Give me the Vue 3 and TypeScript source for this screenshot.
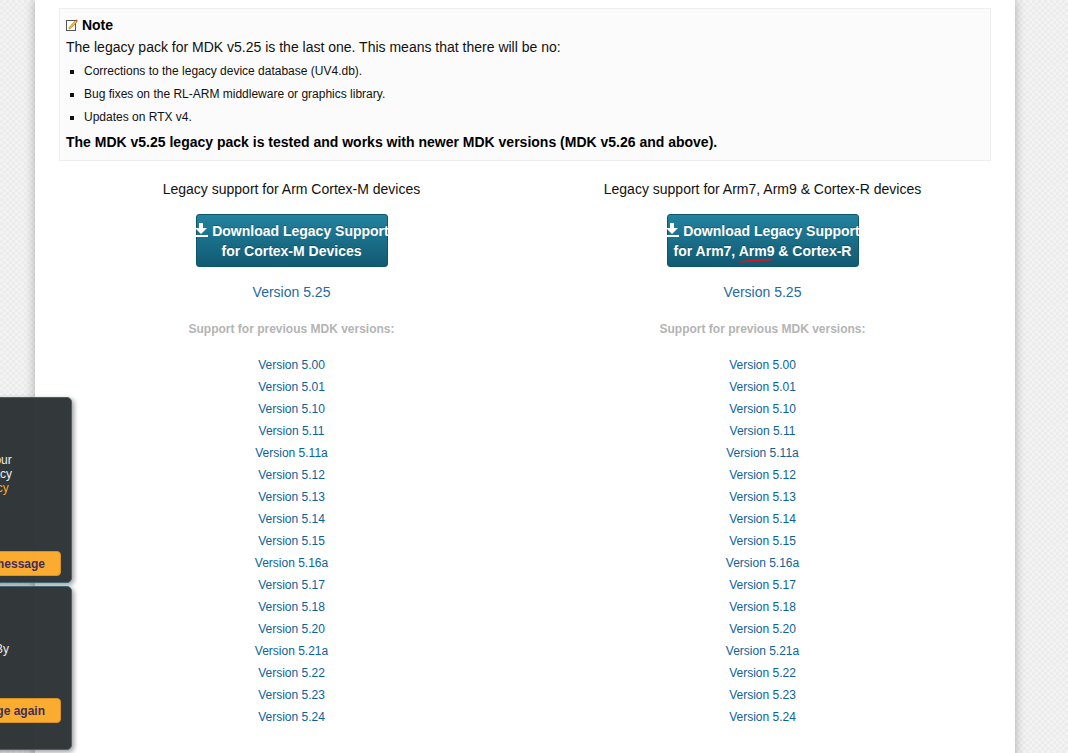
<template>
  <div class="page">
    <main class="sheet">
      <section class="note">
        <h4 class="note-title">
          <svg class="note-icon" viewBox="0 0 12 12" width="12" height="12">
            <rect x="0.5" y="1.5" width="9" height="10" fill="#fff" stroke="#555" />
            <path d="M3 8.5 L9.5 1.5 L11 3 L4.5 9.5 L3 10 Z" fill="#f2c230" stroke="#8a6a10" stroke-width="0.5" />
            <path d="M9.5 1.5 L10.5 0.5 L11.7 1.8 L11 3 Z" fill="#d8342a" />
          </svg>
          Note
        </h4>
        <p class="note-text">The legacy pack for MDK v5.25 is the last one. This means that there will be no:</p>
        <ul class="note-list">
          <li>Corrections to the legacy device database (UV4.db).</li>
          <li>Bug fixes on the RL-ARM middleware or graphics library.</li>
          <li>Updates on RTX v4.</li>
        </ul>
        <p class="note-strong">The MDK v5.25 legacy pack is tested and works with newer MDK versions (MDK v5.26 and above).</p>
      </section>

      <div class="columns">
        <section class="column">
          <h5 class="column-title">Legacy support for Arm Cortex-M devices</h5>
          <a class="download" href="#">
            <span class="download-line">
              <svg class="download-icon" viewBox="0 0 14 14" width="14" height="14">
                <path d="M5 0 H9 V5 H13 L7 11 L1 5 H5 Z M0 12 H14 V14 H0 Z" fill="#fff" />
              </svg>
              Download Legacy Support
            </span>
            <span class="download-line second">for Cortex-M Devices</span>
          </a>
          <a class="latest" href="#">Version 5.25</a>
          <p class="previous">Support for previous MDK versions:</p>
          <ul class="versions">
            <li v-for="v in versions" :key="v"><a href="#">Version {{ v }}</a></li>
          </ul>
        </section>

        <section class="column">
          <h5 class="column-title">Legacy support for Arm7, Arm9 &amp; Cortex-R devices</h5>
          <a class="download" href="#">
            <span class="download-line">
              <svg class="download-icon" viewBox="0 0 14 14" width="14" height="14">
                <path d="M5 0 H9 V5 H13 L7 11 L1 5 H5 Z M0 12 H14 V14 H0 Z" fill="#fff" />
              </svg>
              Download Legacy Support
            </span>
            <span class="download-line second">for Arm7, <span class="marked">Arm9<svg class="scribble" viewBox="0 0 34 5" width="34" height="5"><path d="M1 4 C8 3 12 2.6 18 2.4 C24 2.2 28 1.8 33 1.4" fill="none" stroke="#e0141c" stroke-width="1.6" stroke-linecap="round" /></svg></span> &amp; Cortex-R</span>
          </a>
          <a class="latest" href="#">Version 5.25</a>
          <p class="previous">Support for previous MDK versions:</p>
          <ul class="versions">
            <li v-for="v in versions" :key="v"><a href="#">Version {{ v }}</a></li>
          </ul>
        </section>
      </div>
    </main>

    <aside class="popup policy">
      <h6 class="popup-title">Arm Privacy Policy Update</h6>
      <p class="popup-text">
        Arm's Privacy Policy has been<br />
        updated. By continuing to use our<br />
        site, you consent to Arm's Privacy<br />
        Policy. Please review our <a href="#">Privacy</a><br />
        Policy to learn more about our<br />
        collection, use and transfers<br />
        of your data.
      </p>
      <button class="popup-button">Accept and hide this message</button>
    </aside>

    <aside class="popup cookies">
      <h6 class="popup-title">Important Information</h6>
      <p class="popup-text">
        This site uses cookies to store<br />
        information on your computer. By<br />
        continuing to use our site, you<br />
        consent to our <a href="#">cookies</a>.
      </p>
      <button class="popup-button">Don't show this message again</button>
      <a class="popup-link" href="#">Change Settings</a>
    </aside>
  </div>
</template>

<script setup lang="ts">
const versions: string[] = [
  '5.00', '5.01', '5.10', '5.11', '5.11a', '5.12', '5.13', '5.14', '5.15',
  '5.16a', '5.17', '5.18', '5.20', '5.21a', '5.22', '5.23', '5.24',
];
</script>

<style>
html,
body {
  margin: 0;
  height: 100%;
  overflow: hidden;
}
</style>

<style scoped>
.page {
  position: relative;
  height: 753px;
  overflow: hidden;
  font-family: "Liberation Sans", Arial, sans-serif;
  color: #111;
  background-color: #ececec;
  background-image:
    linear-gradient(45deg, #f3f3f3 25%, transparent 25%, transparent 75%, #f3f3f3 75%),
    linear-gradient(45deg, #f3f3f3 25%, transparent 25%, transparent 75%, #f3f3f3 75%);
  background-size: 6px 6px;
  background-position: 0 0, 3px 3px;
}

.sheet {
  width: 932px;
  height: 753px;
  margin-left: 35px;
  padding: 8px 24px 0;
  background: #fff;
  box-shadow: 0 0 10px rgba(0, 0, 0, 0.3);
}

.note {
  height: 153px;
  box-sizing: border-box;
  padding: 7px 6px 0;
  background: #fbfbfb;
  border: 1px solid #eee;
}

.note-title {
  margin: 0;
  font-size: 14px;
  line-height: 18px;
  font-weight: bold;
  color: #000;
}

.note-icon {
  vertical-align: -1px;
}

.note-text {
  margin: 3px 0 0;
  font-size: 14px;
  line-height: 20px;
}

.note-list {
  margin: 3px 0 0;
  padding: 0 0 0 18px;
  list-style: square;
  font-size: 12px;
  line-height: 23px;
}

.note-strong {
  margin: 3px 0 0;
  font-size: 14px;
  line-height: 20px;
  font-weight: bold;
  color: #000;
}

.columns {
  display: grid;
  grid-template-columns: 471px 471px;
  margin-left: -3px;
  width: 942px;
}

.column {
  display: flex;
  flex-direction: column;
  align-items: center;
}

.column-title {
  margin: 18px 0 0;
  font-size: 14px;
  line-height: 20px;
  font-weight: normal;
}

.download {
  display: flex;
  flex-direction: column;
  align-items: center;
  box-sizing: border-box;
  width: 192px;
  height: 53px;
  margin-top: 15px;
  padding-top: 6px;
  border: 1px solid #0e566c;
  border-radius: 3px;
  background: linear-gradient(#23829f, #115a72);
  color: #fff;
  font-size: 14px;
  font-weight: bold;
  line-height: 20px;
  text-decoration: none;
  text-shadow: 0 -1px 0 rgba(0, 0, 0, 0.25);
}

.download-line {
  white-space: nowrap;
}

.download-icon {
  vertical-align: -1px;
}

.marked {
  position: relative;
}

.scribble {
  position: absolute;
  left: 0;
  top: 15px;
}

.latest {
  margin-top: 15px;
  font-size: 14px;
  line-height: 20px;
  color: #1f6aa5;
  text-decoration: none;
}

.previous {
  margin: 18px 0 0;
  font-size: 12px;
  line-height: 18px;
  font-weight: bold;
  color: #b4b4b4;
}

.versions {
  margin: 16px 0 0;
  padding: 0;
  list-style: none;
  font-size: 12px;
  line-height: 22px;
  text-align: center;
}

.versions a {
  color: #0b629c;
  text-decoration: none;
}

.popup {
  position: absolute;
  left: -188px;
  width: 260px;
  box-sizing: border-box;
  padding: 12px 12px 0 20px;
  background: #2f3537;
  border: 1px solid #3b6470;
  border-radius: 5px;
  box-shadow: 2px 2px 5px rgba(0, 0, 0, 0.4);
  color: #eee;
  font-size: 12px;
  opacity: 0.98;
}

.policy {
  top: 397px;
  height: 186px;
}

.cookies {
  top: 586px;
  height: 164px;
}

.popup-title {
  margin: 0;
  font-size: 12px;
  line-height: 16px;
  font-weight: bold;
  color: #f5a623;
}

.popup-text {
  margin: 13px 0 0;
  line-height: 14px;
  white-space: nowrap;
}

.popup-text a,
.popup-link {
  color: #f5a623;
  text-decoration: none;
}

.popup-button {
  display: block;
  width: 228px;
  height: 25px;
  margin-top: 14px;
  padding: 0;
  border: 1px solid #d89020;
  border-radius: 4px;
  background: #fbab2c;
  color: #3f2a58;
  font-family: inherit;
  font-size: 12px;
  font-weight: bold;
  text-align: right;
  padding-right: 15px;
}

.popup-link {
  display: block;
  margin-top: 7px;
  line-height: 14px;
}
</style>
